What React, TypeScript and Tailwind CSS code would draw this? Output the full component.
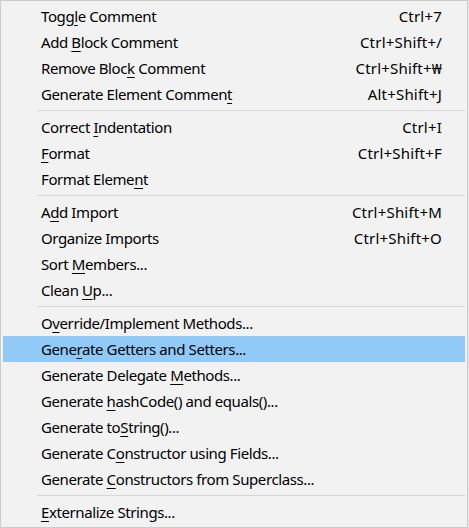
type Item = { label: string; u?: number; key?: string; active?: boolean } | 'sep'

// u = index of the mnemonic letter that gets underlined
const items: Item[] = [
    { label: 'Toggle Comment', u: 4, key: 'Ctrl+7' },
    { label: 'Add Block Comment', u: 4, key: 'Ctrl+Shift+/' },
    { label: 'Remove Block Comment', u: 11, key: 'Ctrl+Shift+₩' },
    { label: 'Generate Element Comment', u: 23, key: 'Alt+Shift+J' },
    'sep',
    { label: 'Correct Indentation', u: 8, key: 'Ctrl+I' },
    { label: 'Format', u: 0, key: 'Ctrl+Shift+F' },
    { label: 'Format Element', u: 12 },
    'sep',
    { label: 'Add Import', u: 1, key: 'Ctrl+Shift+M' },
    { label: 'Organize Imports', key: 'Ctrl+Shift+O' },
    { label: 'Sort Members...', u: 5 },
    { label: 'Clean Up...', u: 6 },
    'sep',
    { label: 'Override/Implement Methods...', u: 1 },
    { label: 'Generate Getters and Setters...', u: 4, active: true },
    { label: 'Generate Delegate Methods...', u: 18 },
    { label: 'Generate hashCode() and equals()...', u: 9 },
    { label: 'Generate toString()...', u: 11 },
    { label: 'Generate Constructor using Fields...', u: 10 },
    { label: 'Generate Constructors from Superclass...', u: 9 },
    'sep',
    { label: 'Externalize Strings...', u: 0 },
]

function Label({ text, u }: { text: string; u?: number }) {
    if (u === undefined) return <span className="tracking-[-0.4px]">{text}</span>
    return (
        <span className="tracking-[-0.4px]">
            {text.slice(0, u)}
            <span className="underline decoration-1 underline-offset-[3px]">{text[u]}</span>
            {text.slice(u + 1)}
        </span>
    )
}

export default function App() {
    return (
        <div className="w-[469px] h-[528px] bg-[#e6e6e6]">
            <div
                className="w-[468px] h-[528px] border border-[#cccccc] bg-[#f2f2f2] p-[2px] text-[15px] text-black"
                style={{ fontFamily: '"Noto Sans", "Noto Sans CJK KR", sans-serif' }}
            >
                {items.map((it, i) =>
                    it === 'sep' ? (
                        <div key={i} className="h-[7px] flex items-center pl-[34px]">
                            <div className="h-px w-full bg-[#d7d7d7]"></div>
                        </div>
                    ) : (
                        <div
                            key={i}
                            className={`h-[26px] flex items-center justify-between pl-[38px] pr-[23px] leading-none ${it.active ? 'bg-[#91c9f7]' : ''}`}
                        >
                            <Label text={it.label} u={it.u} />
                            {it.key && <span className="tracking-[0.2px]">{it.key}</span>}
                        </div>
                    )
                )}
            </div>
        </div>
    )
}
